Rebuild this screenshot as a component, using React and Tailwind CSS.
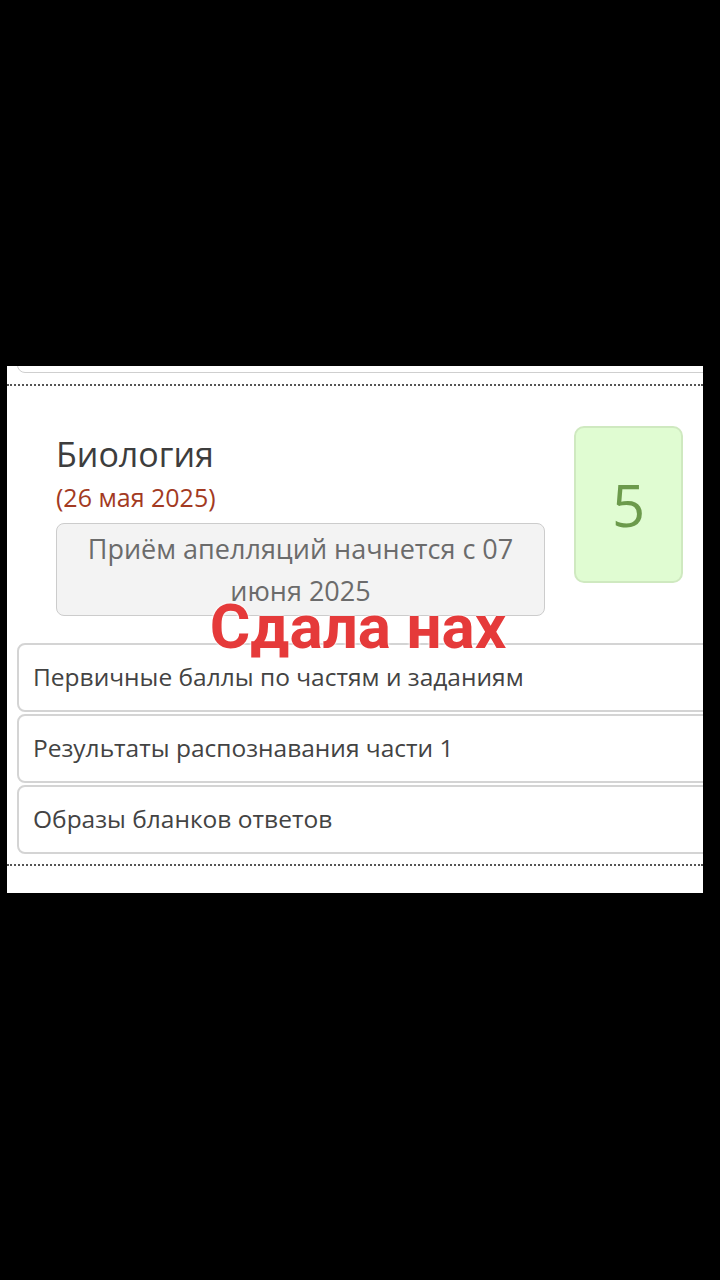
export default function App() {
  const links = [
    "Первичные баллы по частям и заданиям",
    "Результаты распознавания части 1",
    "Образы бланков ответов",
  ];

  return (
    <div
      className="w-[720px] h-[1280px] bg-black pt-[366px]"
      style={{ fontFamily: '"Open Sans", "Noto Sans", sans-serif' }}
    >
      <div className="relative ml-[7px] w-[696px] h-[527px] bg-white overflow-hidden">
        {/* previous card tail */}
        <div className="-mt-[20px] ml-[10px] -mr-[20px] h-[27px] border border-[#cfcfcf] rounded-lg" />
        <div className="mt-[11px] border-t-2 border-dotted border-[#555]" />

        {/* exam block */}
        <div className="flex pt-[48px] pl-[49px] pr-[20px]">
          <div className="w-[489px]">
            <h2 className="text-[34px] leading-[40px] text-[#3d3d3d]">Биология</h2>
            <p className="mt-[8px] text-[25px] leading-[30px] text-[#a33a22]">(26 мая 2025)</p>
            <div className="mt-[11px] h-[93px] rounded-lg border border-[#cccccc] bg-[#f3f3f3] pt-[4px] px-[10px] text-center text-[27px] leading-[42px] text-[#6b6b6b]">
              Приём апелляций начнется с 07 июня 2025
            </div>
          </div>
          <div className="ml-auto -mt-[8px] w-[109px] h-[157px] rounded-[10px] border-2 border-[#cfe9c0] bg-[#e0fcd2] flex items-center justify-center text-[58px] text-[#6c9a4c]">
            5
          </div>
        </div>

        {/* links */}
        <div className="mt-[27px] ml-[10px] -mr-[20px] flex flex-col gap-[2px]">
          {links.map((t, i) => (
            <div
              key={i}
              className="h-[69px] rounded-lg border-2 border-[#d4d4d4] flex items-center pl-[14px] text-[24.5px] text-[#434343]"
            >
              {t}
            </div>
          ))}
        </div>
        <div className="mt-[10px] border-t-2 border-dotted border-[#555]" />

        {/* overlay caption */}
        <div
          className="absolute left-0 right-0 top-[229px] pl-[6px] text-center text-[62px] font-bold leading-[64px] text-[#e53a3a]"
          style={{ fontFamily: 'Roboto, "Liberation Sans", sans-serif', textShadow: "0 0 3px #fff, 0 0 3px #fff" }}
        >
          Сдала нах
        </div>
      </div>
    </div>
  );
}
